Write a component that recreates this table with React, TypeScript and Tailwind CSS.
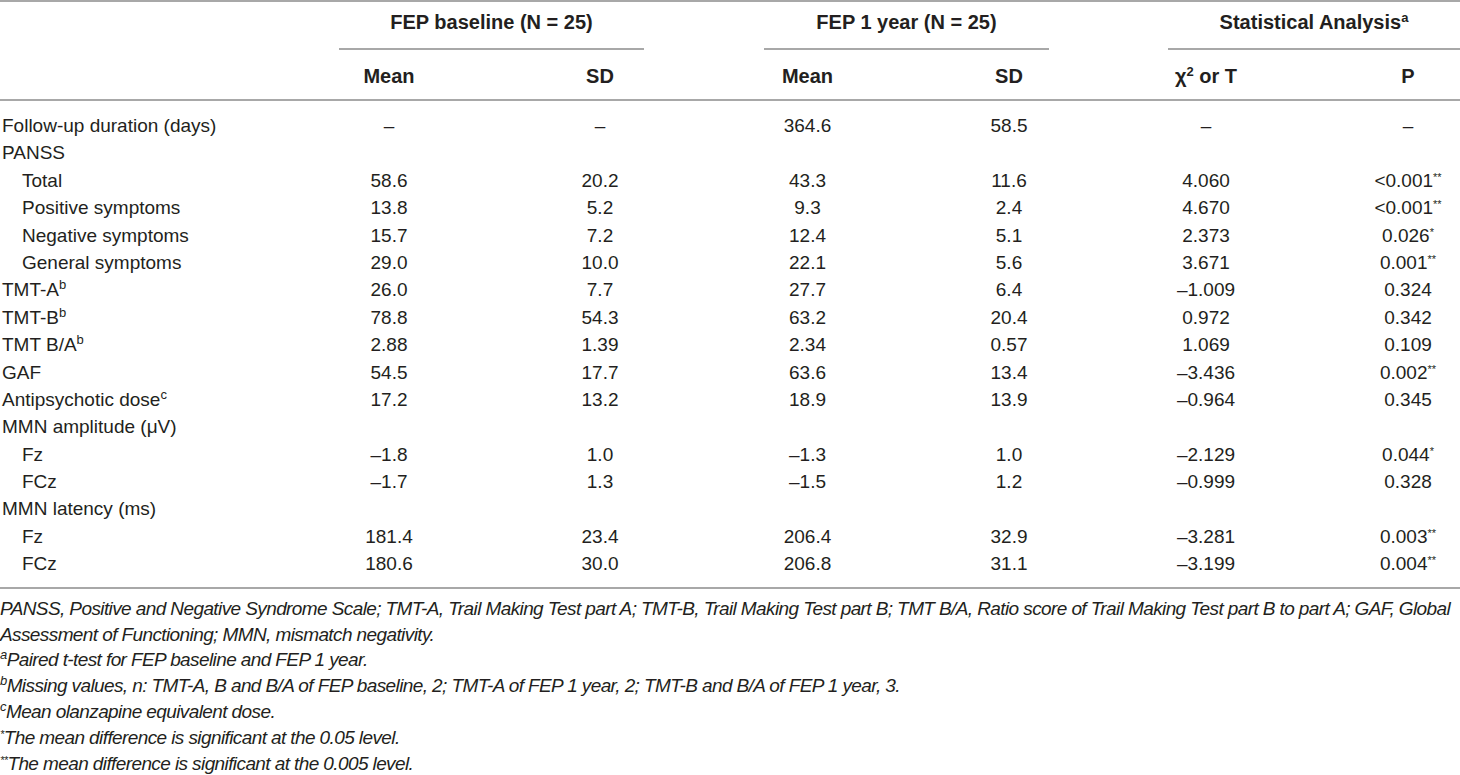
import type { ReactNode } from "react";

// Columnas: etiqueta, Mean, SD, Mean, SD, χ² o T, P
const GRID =
  "grid grid-cols-[283px_212px_210px_205px_198px_196px_156px] items-center";

type Row = {
  label: ReactNode;
  indent?: boolean;
  values?: ReactNode[];
};

function Star({ n }: { n: number }) {
  return (
    <span className="relative -top-[6px] text-[11px] leading-none">
      {"*".repeat(n)}
    </span>
  );
}

function Sup({ children }: { children: ReactNode }) {
  return (
    <span className="relative -top-[7px] text-[13px] leading-none">
      {children}
    </span>
  );
}

const rows: Row[] = [
  { label: "Follow-up duration (days)", values: ["–", "–", "364.6", "58.5", "–", "–"] },
  { label: "PANSS" },
  { label: "Total", indent: true, values: ["58.6", "20.2", "43.3", "11.6", "4.060", <>{"<0.001"}<Star n={2} /></>] },
  { label: "Positive symptoms", indent: true, values: ["13.8", "5.2", "9.3", "2.4", "4.670", <>{"<0.001"}<Star n={2} /></>] },
  { label: "Negative symptoms", indent: true, values: ["15.7", "7.2", "12.4", "5.1", "2.373", <>0.026<Star n={1} /></>] },
  { label: "General symptoms", indent: true, values: ["29.0", "10.0", "22.1", "5.6", "3.671", <>0.001<Star n={2} /></>] },
  { label: <>TMT-A<Sup>b</Sup></>, values: ["26.0", "7.7", "27.7", "6.4", "–1.009", "0.324"] },
  { label: <>TMT-B<Sup>b</Sup></>, values: ["78.8", "54.3", "63.2", "20.4", "0.972", "0.342"] },
  { label: <>TMT B/A<Sup>b</Sup></>, values: ["2.88", "1.39", "2.34", "0.57", "1.069", "0.109"] },
  { label: "GAF", values: ["54.5", "17.7", "63.6", "13.4", "–3.436", <>0.002<Star n={2} /></>] },
  { label: <>Antipsychotic dose<Sup>c</Sup></>, values: ["17.2", "13.2", "18.9", "13.9", "–0.964", "0.345"] },
  { label: "MMN amplitude (μV)" },
  { label: "Fz", indent: true, values: ["–1.8", "1.0", "–1.3", "1.0", "–2.129", <>0.044<Star n={1} /></>] },
  { label: "FCz", indent: true, values: ["–1.7", "1.3", "–1.5", "1.2", "–0.999", "0.328"] },
  { label: "MMN latency (ms)" },
  { label: "Fz", indent: true, values: ["181.4", "23.4", "206.4", "32.9", "–3.281", <>0.003<Star n={2} /></>] },
  { label: "FCz", indent: true, values: ["180.6", "30.0", "206.8", "31.1", "–3.199", <>0.004<Star n={2} /></>] },
];

export default function App() {
  return (
    <div
      className="w-[1460px] h-[775px] overflow-hidden bg-white text-[#231f20]"
      style={{ fontFamily: '"Liberation Sans", Arial, sans-serif' }}
    >
      {/* Cabecera de grupos */}
      <div className={`${GRID} h-[50px] border-t-2 border-[#a8a8a8] text-[20px] font-bold`}>
        <div />
        <div className="col-span-2 ml-[56px] mr-[61px] h-full flex flex-col justify-end">
          <div className="text-center pb-[11px]">FEP baseline (N = 25)</div>
          <div className="h-[2px] bg-[#a8a8a8]" />
        </div>
        <div className="col-span-2 ml-[59px] mr-[59px] h-full flex flex-col justify-end">
          <div className="text-center pb-[11px]">FEP 1 year (N = 25)</div>
          <div className="h-[2px] bg-[#a8a8a8]" />
        </div>
        <div className="col-span-2 ml-[60px] h-full flex flex-col justify-end">
          <div className="text-center pb-[11px]">
            Statistical Analysis<Sup>a</Sup>
          </div>
          <div className="h-[2px] bg-[#a8a8a8]" />
        </div>
      </div>

      {/* Subcabecera */}
      <div className={`${GRID} h-[51px] pt-[2px] border-b-2 border-[#a8a8a8] text-[20px] font-bold`}>
        <div />
        <div className="text-center">Mean</div>
        <div className="text-center">SD</div>
        <div className="text-center">Mean</div>
        <div className="text-center">SD</div>
        <div className="text-center">
          χ<Sup>2</Sup> or T
        </div>
        <div className="text-center pl-[52px]">P</div>
      </div>

      {/* Filas de datos */}
      <div className="pt-[11px] pb-[9px] border-b-2 border-[#a8a8a8] text-[19px]">
        {rows.map((r, i) => (
          <div key={i} className={`${GRID} h-[27.4px] leading-[27.4px]`}>
            <div className={`whitespace-nowrap ${r.indent ? "pl-[22px]" : "pl-[2px]"}`}>
              {r.label}
            </div>
            {r.values?.map((v, j) => (
              <div
                key={j}
                className={`text-center whitespace-nowrap ${j === 5 ? "pl-[52px]" : ""}`}
              >
                {v}
              </div>
            ))}
          </div>
        ))}
      </div>

      {/* Notas al pie */}
      <div className="pt-[7px] text-[19px] italic leading-[25.9px] tracking-[-0.6px] whitespace-nowrap">
        <div>
          PANSS, Positive and Negative Syndrome Scale; TMT-A, Trail Making Test part A; TMT-B, Trail Making Test part B; TMT B/A, Ratio score of Trail Making Test part B to part A; GAF, Global
        </div>
        <div>Assessment of Functioning; MMN, mismatch negativity.</div>
        <div>
          <Sup>a</Sup>Paired t-test for FEP baseline and FEP 1 year.
        </div>
        <div>
          <Sup>b</Sup>Missing values, n: TMT-A, B and B/A of FEP baseline, 2; TMT-A of FEP 1 year, 2; TMT-B and B/A of FEP 1 year, 3.
        </div>
        <div>
          <Sup>c</Sup>Mean olanzapine equivalent dose.
        </div>
        <div>
          <Star n={1} />The mean difference is significant at the 0.05 level.
        </div>
        <div>
          <Star n={2} />The mean difference is significant at the 0.005 level.
        </div>
      </div>
    </div>
  );
}
